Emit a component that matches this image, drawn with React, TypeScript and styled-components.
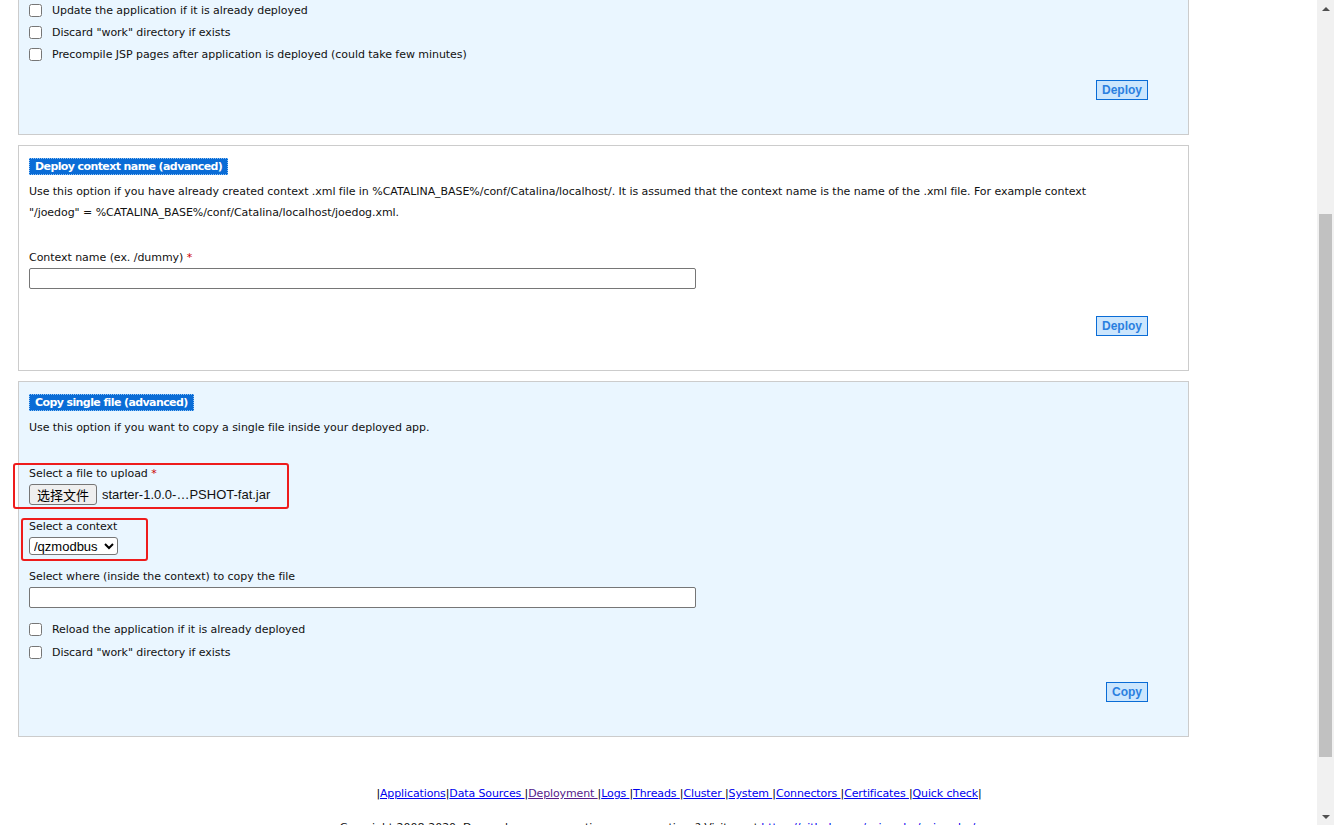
import { FC, ReactNode } from 'react';
import styled, { createGlobalStyle } from 'styled-components';

const GlobalStyle = createGlobalStyle`
  html, body {
    margin: 0;
    padding: 0;
    height: 825px;
    overflow: hidden;
  }
  body {
    font-family: 'DejaVu Sans', Verdana, sans-serif;
    font-size: 11px;
    letter-spacing: -0.05px;
    color: #111;
  }
`;

const Screen = styled.div({
  display: 'flex',
  height: 825,
  overflow: 'hidden',
});

const Main = styled.main({
  flex: 1,
  background: '#fff',
  padding: '0 0 0 18px',
  marginTop: -1,
});

const Panel = styled.section<{ $tinted?: boolean; $first?: boolean }>`
  width: 1149px;
  background: ${({ $tinted }) => ($tinted ? '#eaf6ff' : '#fff')};
  border: 1px solid #ccc;
  border-top-width: ${({ $first }) => ($first ? 0 : 1)}px;
  padding: ${({ $first }) => ($first ? '0' : '12px')} 10px 34px 10px;
  margin-bottom: 10px;
`;

const Heading = styled.div({
  display: 'inline-block',
  boxSizing: 'border-box',
  height: 17,
  lineHeight: '15px',
  padding: '0 5px',
  background: '#0a6cd6',
  border: '1px dotted #8ec2f5',
  color: '#fff',
  fontWeight: 'bold',
  fontSize: 11,
  letterSpacing: '-0.6px',
});

const Description = styled.p({
  margin: '6px 0 0',
  maxWidth: 1110,
  lineHeight: '21px',
});

const Field = styled.div<{ $gap: number }>`
  position: relative;
  margin-top: ${({ $gap }) => $gap}px;
`;

const Annotation = styled.div<{ $l: number; $t: number; $w: number; $h: number }>`
  position: absolute;
  left: ${({ $l }) => $l}px;
  top: ${({ $t }) => $t}px;
  width: ${({ $w }) => $w}px;
  height: ${({ $h }) => $h}px;
  border: 2px solid #ee1c1c;
  border-radius: 3px;
  box-sizing: border-box;
  pointer-events: none;
`;

const Label = styled.div({
  lineHeight: '16px',
});

const Required = styled.span({
  color: '#c00',
});

const TextInput = styled.input({
  display: 'block',
  boxSizing: 'border-box',
  width: 667,
  height: 21,
  marginTop: 2,
  border: '1px solid #767676',
  borderRadius: 2,
  background: '#fff',
  padding: '0 4px',
});

const FileRow = styled.div({
  display: 'flex',
  alignItems: 'center',
  marginTop: 2,
  fontFamily: "'Liberation Sans', Arial, sans-serif",
  fontSize: 13,
  letterSpacing: 0,
});

const FileButton = styled.button({
  boxSizing: 'border-box',
  width: 68,
  height: 21,
  padding: 0,
  border: '1px solid #767676',
  borderRadius: 3,
  background: '#efefef',
  fontFamily: "'Noto Sans CJK SC', sans-serif",
  fontSize: 13,
  color: '#000',
  marginRight: 5,
});

const Select = styled.select({
  display: 'block',
  boxSizing: 'border-box',
  width: 89,
  height: 18,
  marginTop: 2,
  border: '1px solid #767676',
  borderRadius: 3,
  background: '#fff',
  fontFamily: "'Liberation Sans', Arial, sans-serif",
  fontSize: 13,
  color: '#000',
});

const Checks = styled.div<{ $gap: number }>`
  margin-top: ${({ $gap }) => $gap}px;
`;

const CheckRow = styled.label<{ $h?: number }>`
  display: flex;
  align-items: center;
  height: ${({ $h }) => $h ?? 22}px;
  input {
    width: 13px;
    height: 13px;
    margin: 0 10px 0 0;
  }
`;

const Actions = styled.div<{ $gap: number }>`
  display: flex;
  justify-content: flex-end;
  margin-top: ${({ $gap }) => $gap}px;
  padding-right: 30px;
`;

const ActionButton = styled.button({
  boxSizing: 'border-box',
  height: 20,
  padding: '0 5px',
  background: '#cce6fd',
  border: '1px solid #0a6cd6',
  color: '#2a7fe0',
  fontFamily: "'Liberation Sans', Arial, sans-serif",
  fontWeight: 'bold',
  fontSize: 12,
  lineHeight: '18px',
});

const Footer = styled.footer({
  marginTop: 49,
  paddingLeft: 23,
  textAlign: 'center',
});

const Nav = styled.div({
  lineHeight: '16px',
  letterSpacing: '-0.12px',
});

const Sep = styled.span({
  color: '#000',
});

const Link = styled.a<{ $visited?: boolean }>`
  color: ${({ $visited }) => ($visited ? '#551a8b' : '#0000ee')};
  text-decoration: underline;
  white-space: pre;
`;

const Copyright = styled.div({
  marginTop: 18,
  paddingRight: 43,
  lineHeight: '16px',
});

const Scrollbar = styled.div({
  width: 17,
  background: '#f1f1f1',
  display: 'flex',
  flexDirection: 'column',
  alignItems: 'center',
});

const Arrow = styled.div<{ $down?: boolean }>`
  height: 17px;
  width: 17px;
  display: flex;
  align-items: center;
  justify-content: center;
  &::before {
    content: '';
    border-left: 4px solid transparent;
    border-right: 4px solid transparent;
    ${({ $down }) =>
      $down ? 'border-top: 4px solid #505050;' : 'border-bottom: 4px solid #505050;'}
  }
`;

const Track = styled.div({
  flex: 1,
  width: '100%',
});

const Thumb = styled.div({
  margin: '197px 2px 0',
  height: 543,
  background: '#c1c1c1',
});

const Check: FC<{ children: ReactNode; h?: number }> = ({ children, h }) => (
  <CheckRow $h={h}>
    <input type="checkbox" />
    <span>{children}</span>
  </CheckRow>
);

const navItems: { label: string; visited?: boolean }[] = [
  { label: 'Applications' },
  { label: 'Data Sources ' },
  { label: 'Deployment ', visited: true },
  { label: 'Logs ' },
  { label: 'Threads ' },
  { label: 'Cluster ' },
  { label: 'System ' },
  { label: 'Connectors ' },
  { label: 'Certificates ' },
  { label: 'Quick check' },
];

const App: FC = () => {
  return (
    <>
      <GlobalStyle />
      <Screen>
        <Main>
          <Panel $tinted $first>
            <Checks $gap={0}>
              <Check>Update the application if it is already deployed</Check>
              <Check>Discard "work" directory if exists</Check>
              <Check>Precompile JSP pages after application is deployed (could take few minutes)</Check>
            </Checks>
            <Actions $gap={15}>
              <ActionButton>Deploy</ActionButton>
            </Actions>
          </Panel>

          <Panel>
            <Heading>Deploy context name (advanced)</Heading>
            <Description>
              Use this option if you have already created context .xml file in
              %CATALINA_BASE%/conf/Catalina/localhost/. It is assumed that the context name is the
              name of the .xml file. For example context "/joedog" =
              %CATALINA_BASE%/conf/Catalina/localhost/joedog.xml.
            </Description>
            <Field $gap={27}>
              <Label>
                Context name (ex. /dummy) <Required>*</Required>
              </Label>
              <TextInput type="text" />
            </Field>
            <Actions $gap={27}>
              <ActionButton>Deploy</ActionButton>
            </Actions>
          </Panel>

          <Panel $tinted>
            <Heading>Copy single file (advanced)</Heading>
            <Description>Use this option if you want to copy a single file inside your deployed app.</Description>
            <Field $gap={28}>
              <Label>
                Select a file to upload <Required>*</Required>
              </Label>
              <FileRow>
                <FileButton>选择文件</FileButton>
                <span>starter-1.0.0-…PSHOT-fat.jar</span>
              </FileRow>
              <Annotation $l={-16} $t={-3} $w={276} $h={46} />
            </Field>
            <Field $gap={14}>
              <Label>Select a context</Label>
              <Select defaultValue="/qzmodbus">
                <option value="/qzmodbus">/qzmodbus</option>
              </Select>
              <Annotation $l={-8} $t={-1} $w={127} $h={43} />
            </Field>
            <Field $gap={14}>
              <Label>Select where (inside the context) to copy the file</Label>
              <TextInput type="text" />
            </Field>
            <Checks $gap={10}>
              <Check h={23}>Reload the application if it is already deployed</Check>
              <Check>Discard "work" directory if exists</Check>
            </Checks>
            <Actions $gap={19}>
              <ActionButton>Copy</ActionButton>
            </Actions>
          </Panel>

          <Footer>
            <Nav>
              <Sep>|</Sep>
              {navItems.map((item) => (
                <span key={item.label}>
                  <Link href="#" $visited={item.visited}>
                    {item.label}
                  </Link>
                  <Sep>|</Sep>
                </span>
              ))}
            </Nav>
            <Copyright>
              Copyright 2008-2020. Do you have any questions or suggestions? Visit us at{' '}
              <Link href="#">https://github.com/psi-probe/psi-probe/</Link>
            </Copyright>
          </Footer>
        </Main>
        <Scrollbar>
          <Arrow />
          <Track>
            <Thumb />
          </Track>
          <Arrow $down />
        </Scrollbar>
      </Screen>
    </>
  );
};

export default App;
